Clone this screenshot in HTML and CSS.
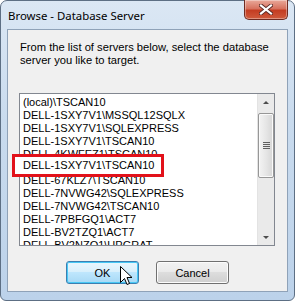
FILE: index.html
```html
<!DOCTYPE html>
<html lang="en">
<head>
  <meta charset="UTF-8" />
  <title>Browse - Database Server</title>
  <link rel="stylesheet" href="styles.css">
</head>
<body>

  <div class="window">
    <div class="titlebar">
      <span class="title">Browse - Database Server</span>
      <button class="close" aria-label="Close">
        <svg width="14" height="11" viewBox="0 0 14 11">
          <path d="M2 1.5 L12 9.5 M12 1.5 L2 9.5" stroke="#5a2a25" stroke-width="4" stroke-linecap="square" />
          <path d="M2 1.5 L12 9.5 M12 1.5 L2 9.5" stroke="#fff" stroke-width="2.2" stroke-linecap="square" />
        </svg>
      </button>
    </div>

    <div class="client">
      <p class="prompt">From the list of servers below, select the database server you like to target.</p>

      <div class="listbox">
        <ul class="items">
          <li>(local)\TSCAN10</li>
          <li>DELL-1SXY7V1\MSSQL12SQLX</li>
          <li>DELL-1SXY7V1\SQLEXPRESS</li>
          <li>DELL-1SXY7V1\TSCAN10</li>
          <li>DELL-4KWFEZ1\TSCAN10</li>
          <li>DELL-4LBY5Z1\ACT7</li>
          <li>DELL-67KLZ7\TSCAN10</li>
          <li>DELL-7NVWG42\SQLEXPRESS</li>
          <li>DELL-7NVWG42\TSCAN10</li>
          <li>DELL-7PBFGQ1\ACT7</li>
          <li>DELL-BV2TZQ1\ACT7</li>
          <li>DELL-BV2NZQ1\UPGRAT</li>
        </ul>
        <div class="scrollbar">
          <div class="arrow arrow-up"></div>
          <div class="track">
            <div class="thumb"><span class="grip"></span></div>
          </div>
          <div class="arrow arrow-down"></div>
        </div>
      </div>

      <div class="buttons">
        <button class="btn btn-ok">OK</button>
        <button class="btn">Cancel</button>
      </div>

      <div class="callout">DELL-1SXY7V1\TSCAN10</div>

      <svg class="cursor" width="13" height="21" viewBox="0 0 13 21">
        <path d="M0.5 0.5 L0.5 16.5 L4.5 12.5 L7 18.5 L9.5 17.5 L7 11.5 L12 11.5 Z" fill="#fff" stroke="#000" stroke-width="1" stroke-linejoin="miter" />
      </svg>
    </div>
  </div>

</body>
</html>
```

FILE: styles.css
```css
* {
  box-sizing: border-box;
}

body {
  margin: 0;
  background: #fff;
  font-family: 'Liberation Sans', Arial, sans-serif;
}

.window {
  width: 295px;
  height: 301px;
  padding: 28px 6px 0 6px;
  border: 1px solid #5d6f84;
  border-radius: 7px 7px 6px 6px;
  background: linear-gradient(180deg, #dbe7f4 0%, #c9dbee 40%, #bcd2ea 100%);
  position: relative;
}

.titlebar {
  position: absolute;
  top: 0;
  left: 0;
  right: 0;
  height: 28px;
}

.title {
  position: absolute;
  left: 7px;
  top: 7px;
  font-family: 'Noto Sans', 'Liberation Sans', sans-serif;
  font-size: 11.4px;
  color: #000;
}

.close {
  position: absolute;
  top: -1px;
  right: 6px;
  width: 44px;
  height: 20px;
  padding: 0;
  border: 1px solid #6e2b22;
  border-top: none;
  border-radius: 0 0 5px 5px;
  background: linear-gradient(180deg, #e9a99a 0%, #d7725f 45%, #c43d22 55%, #cf5a3c 100%);
  box-shadow: inset 0 0 0 1px rgba(255, 255, 255, 0.35);
  display: flex;
  align-items: center;
  justify-content: center;
}

.client {
  position: relative;
  height: 263px;
  background: #f0f0f0;
  border: 1px solid #8fa2b8;
  padding: 11px 0 0 11px;
}

.prompt {
  margin: 0 0 0 1px;
  width: 250px;
  font-size: 11.2px;
  line-height: 13px;
  color: #000;
}

.listbox {
  margin-top: 26px;
  width: 256px;
  height: 153px;
  border: 1px solid #828790;
  background: #fff;
  display: flex;
  overflow: hidden;
}

.items {
  list-style: none;
  margin: 0;
  padding: 2px 0 0 3px;
  flex: 1;
  font-size: 11px;
  line-height: 13px;
  color: #000;
  overflow: hidden;
}

.items li {
  white-space: nowrap;
}

.scrollbar {
  width: 17px;
  display: flex;
  flex-direction: column;
  background: #eaeaea;
  border-left: 1px solid #e3e3e3;
}

.arrow {
  height: 17px;
  position: relative;
}

.arrow::after {
  content: '';
  position: absolute;
  left: 5px;
  border-left: 3px solid transparent;
  border-right: 3px solid transparent;
}

.arrow-up::after {
  top: 7px;
  border-bottom: 3px solid #4d4d4d;
}

.arrow-down::after {
  top: 8px;
  border-top: 3px solid #4d4d4d;
}

.track {
  flex: 1;
  padding-top: 2px;
}

.thumb {
  height: 65px;
  border: 1px solid #979797;
  border-radius: 2px;
  background: linear-gradient(90deg, #f3f3f3 0%, #e6e6e6 50%, #d6d6d6 100%);
  box-shadow: inset 0 0 0 1px #fafafa;
  display: flex;
  align-items: center;
  justify-content: center;
}

.grip {
  width: 7px;
  height: 7px;
  background: repeating-linear-gradient(180deg, #5f5f5f 0 1px, transparent 1px 2px);
}

.buttons {
  margin-top: 15px;
  margin-left: 47px;
  display: flex;
  gap: 17px;
}

.btn {
  width: 73px;
  height: 23px;
  padding: 0;
  border: 1px solid #707070;
  border-radius: 3px;
  background: linear-gradient(180deg, #f2f2f2 0%, #ebebeb 45%, #dddddd 50%, #cfcfcf 100%);
  box-shadow: inset 0 0 0 1px #fcfcfc;
  font-family: 'Liberation Sans', Arial, sans-serif;
  font-size: 11px;
  color: #000;
}

.btn-ok {
  border-color: #3c7fb1;
  background: linear-gradient(180deg, #eaf6fd 0%, #d9f0fc 45%, #bee6fd 50%, #a7d9f5 100%);
  box-shadow: inset 0 0 0 1px #48c8f5;
}

.callout {
  position: absolute;
  left: 4px;
  top: 124px;
  width: 152px;
  height: 23px;
  border: 3px solid #e2111a;
  background: #fff;
  padding-left: 8px;
  font-size: 11px;
  line-height: 17px;
  color: #000;
}

.cursor {
  position: absolute;
  left: 112px;
  top: 236px;
}
```
